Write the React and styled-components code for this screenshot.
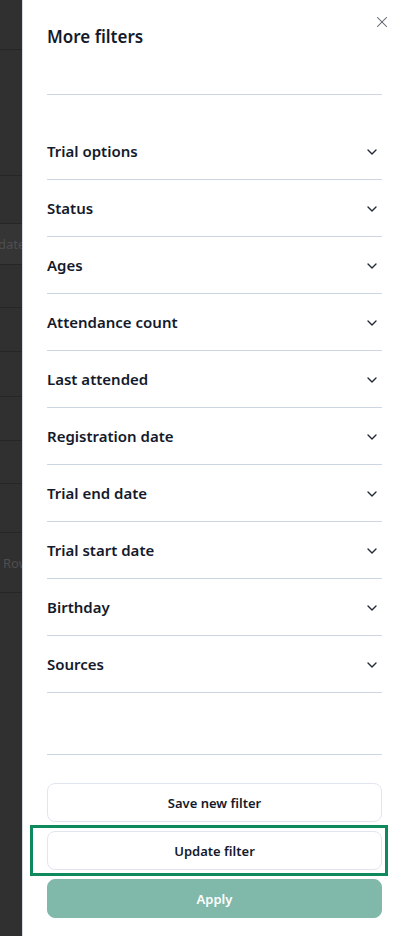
import React from "react";
import styled, { createGlobalStyle } from "styled-components";
import { X, ChevronDown } from "lucide-react";

const Global = createGlobalStyle`
  html, body { margin: 0; padding: 0; }
  body { font-family: "Noto Sans", "Open Sans", sans-serif; background: #fff; }
  * { box-sizing: border-box; }
`;

const Page = styled.div`
  display: flex;
  width: 403px;
  height: 936px;
  overflow: hidden;
`;

const Backdrop = styled.div`
  width: 22px;
  flex: none;
  background: #303030;
  display: flex;
  flex-direction: column;
  overflow: hidden;
`;

const BgRow = styled.div`
  flex: none;
  height: ${(p) => p.$h}px;
  border-bottom: ${(p) => (p.$noLine ? "none" : "1px solid #262626")};
  background: ${(p) => (p.$head ? "#353535" : "transparent")};
  display: flex;
  align-items: center;
  white-space: nowrap;
  font-family: "Noto Sans", sans-serif;
  font-size: 13px;
  color: #4e4e4e;
  padding-left: ${(p) => p.$indent || 0}px;
`;

const Panel = styled.aside`
  position: relative;
  flex: 1;
  background: #ffffff;
  border-left: 1px solid #d3dbe6;
  padding: 0 21px 0 24px;
  display: flex;
  flex-direction: column;
`;

const Header = styled.header`
  padding-top: 25px;
  height: 95px;
  border-bottom: 1px solid #ccd6e2;
`;

const Title = styled.h2`
  margin: 0;
  font-size: 17px;
  line-height: 24px;
  font-weight: 600;
  color: #141a2b;
`;

const Close = styled.button`
  position: absolute;
  top: 13px;
  right: 12px;
  width: 18px;
  height: 18px;
  padding: 0;
  border: none;
  background: none;
  color: #565c68;
  display: flex;
  align-items: center;
  justify-content: center;
`;

const List = styled.div`
  padding-top: 28px;
  display: flex;
  flex-direction: column;
`;

const Row = styled.div`
  height: 57px;
  border-bottom: 1px solid #ccd6e2;
  display: flex;
  align-items: center;
  justify-content: space-between;
  padding-right: 2px;
  font-size: 15px;
  font-weight: 600;
  color: #141a2b;
`;

const Chevron = styled(ChevronDown)`
  color: #222836;
  margin-top: 1px;
`;

const Spacer = styled.div`
  height: 62px;
  border-bottom: 1px solid #ccd6e2;
  flex: none;
`;

const Actions = styled.div`
  padding-top: 28px;
  display: flex;
  flex-direction: column;
  gap: 9px;
`;

const Focus = styled.div`
  margin: -6px -6px -6px -17px;
  padding: 3px 3px 3px 14px;
  border: 3px solid #0f8a5c;
`;

const Button = styled.button`
  width: 100%;
  height: 39px;
  border-radius: 8px;
  border: 1px solid ${(p) => (p.$primary ? "#80b9a9" : "#e1e5ef")};
  background: ${(p) => (p.$primary ? "#80b9a9" : "#ffffff")};
  color: ${(p) => (p.$primary ? "#ffffff" : "#141a2b")};
  font-family: "Noto Sans", sans-serif;
  font-size: 13px;
  font-weight: 600;
  display: flex;
  align-items: center;
  justify-content: center;
  padding: 0;
`;

const filters = [
  "Trial options",
  "Status",
  "Ages",
  "Attendance count",
  "Last attended",
  "Registration date",
  "Trial end date",
  "Trial start date",
  "Birthday",
  "Sources",
];

const bgRows = [
  { h: 50 },
  { h: 126 },
  { h: 48 },
  { h: 41, head: true, text: "date", indent: 0, shift: -2 },
  { h: 43 },
  { h: 44 },
  { h: 45 },
  { h: 44 },
  { h: 43 },
  { h: 49 },
  { h: 60, text: "Row", indent: 3 },
  { h: 343, noLine: true },
];

export default function App() {
  return (
    <>
      <Global />
      <Page>
        <Backdrop>
          {bgRows.map((r, i) => (
            <BgRow key={i} $h={r.h} $head={r.head} $noLine={r.noLine} $indent={r.indent}>
              {r.text ? <span style={{ marginLeft: r.shift || 0 }}>{r.text}</span> : null}
            </BgRow>
          ))}
        </Backdrop>
        <Panel>
          <Close aria-label="Close">
            <X size={18} strokeWidth={1.4} />
          </Close>
          <Header>
            <Title>More filters</Title>
          </Header>
          <List>
            {filters.map((f) => (
              <Row key={f}>
                <span>{f}</span>
                <Chevron size={16} strokeWidth={2} />
              </Row>
            ))}
          </List>
          <Spacer />
          <Actions>
            <Button>Save new filter</Button>
            <Focus>
              <Button>Update filter</Button>
            </Focus>
            <Button $primary>Apply</Button>
          </Actions>
        </Panel>
      </Page>
    </>
  );
}
